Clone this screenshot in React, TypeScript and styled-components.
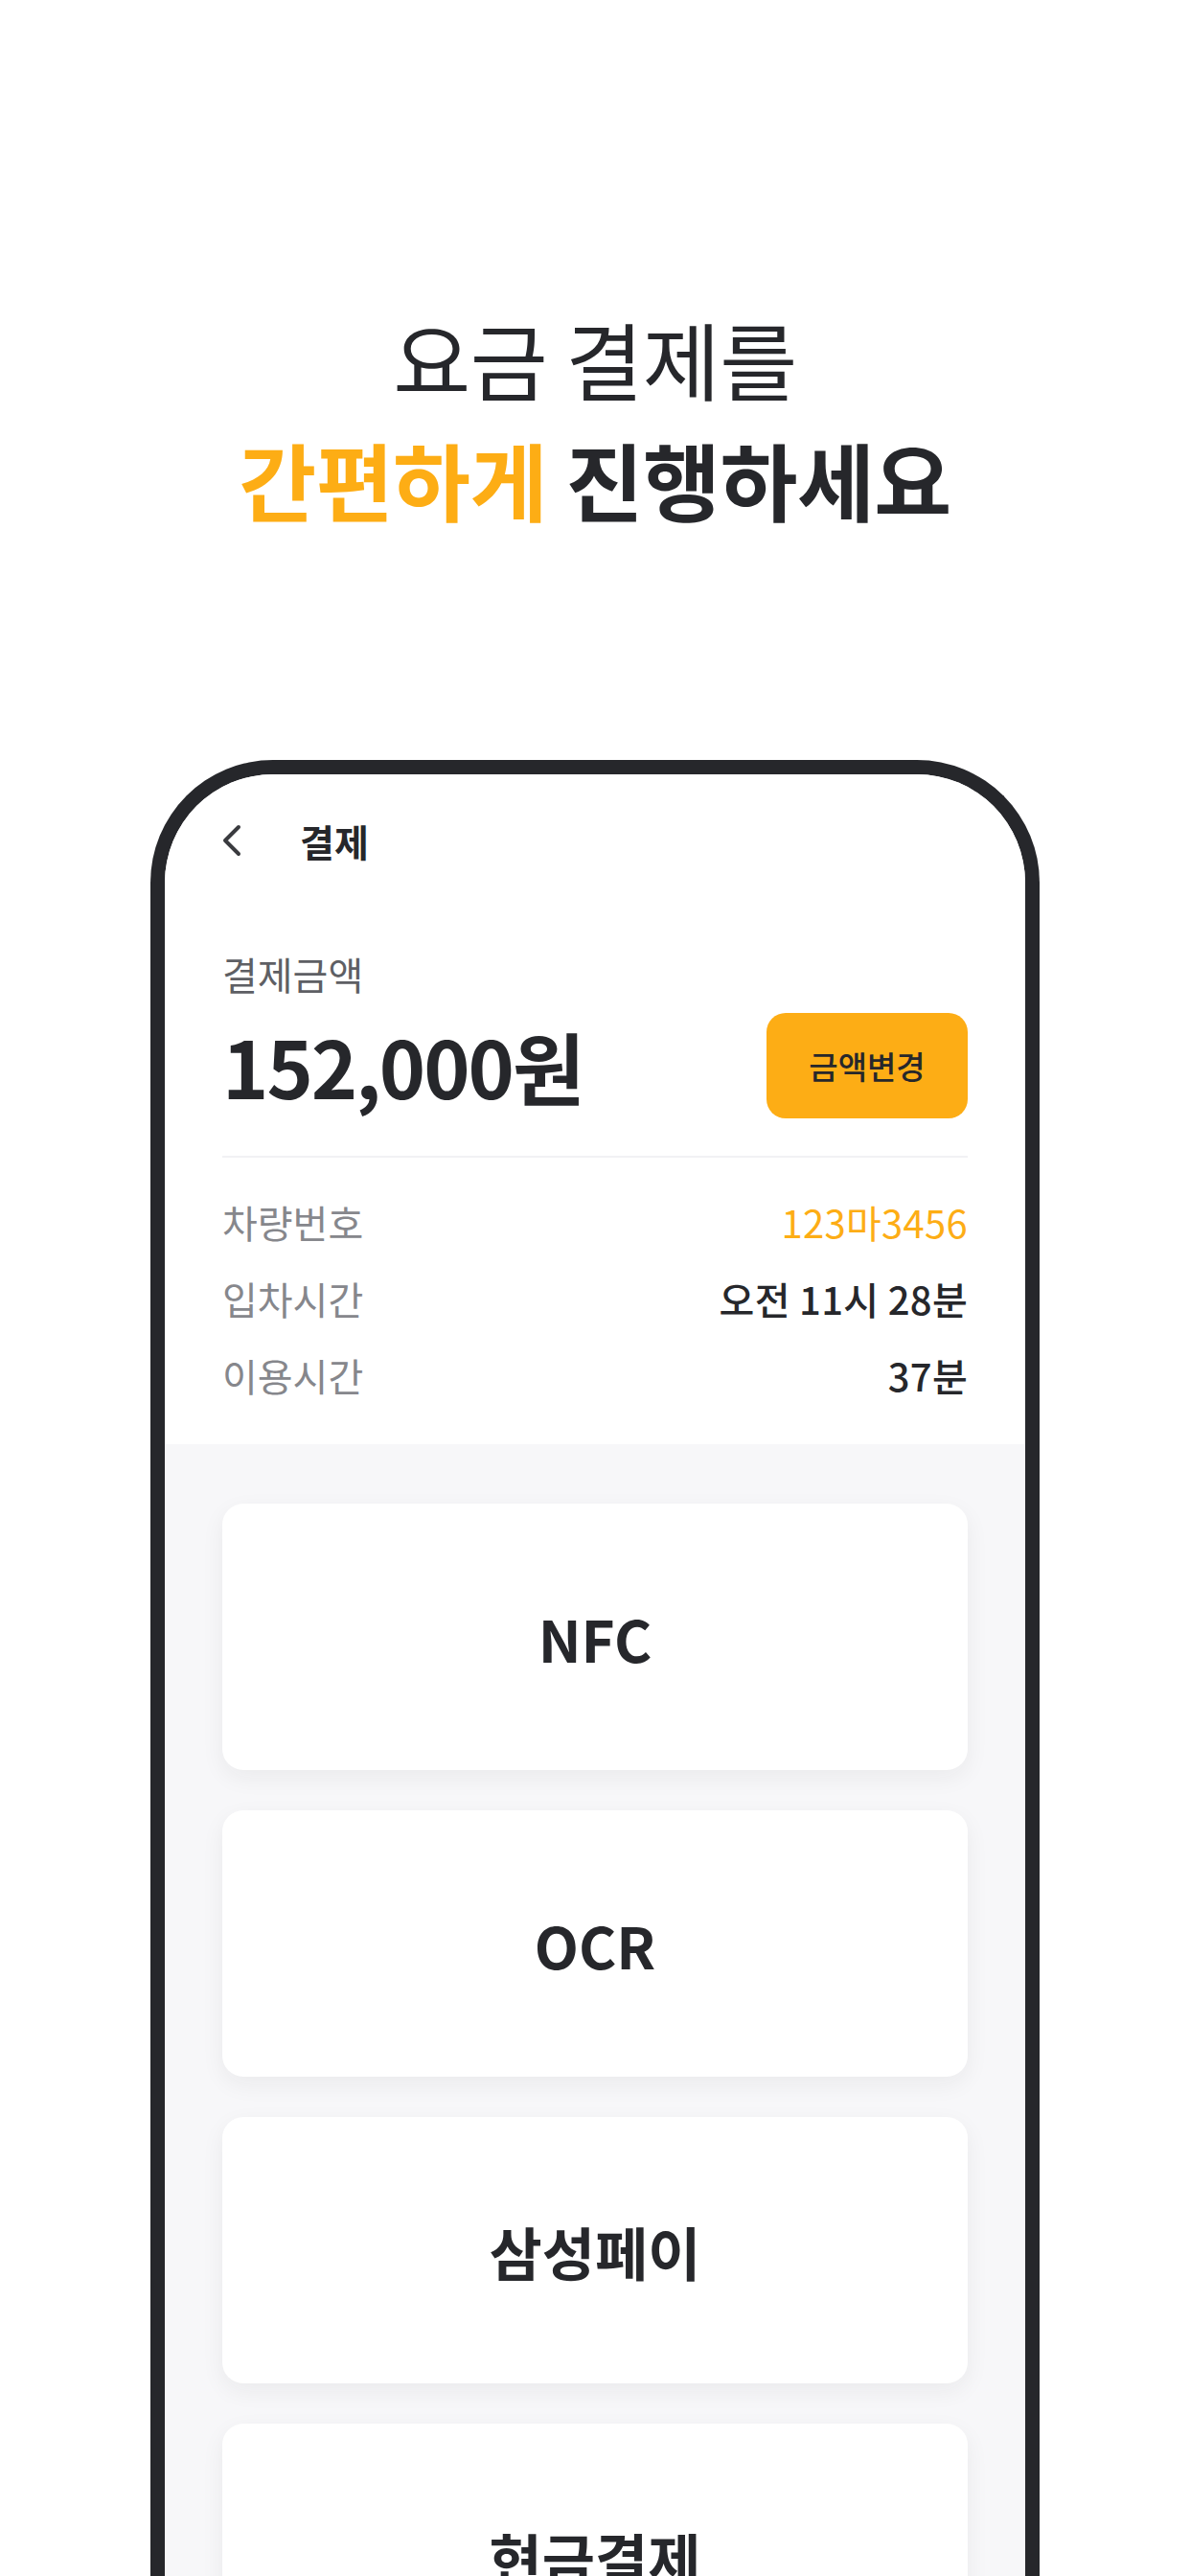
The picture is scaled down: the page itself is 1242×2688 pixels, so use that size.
import React from "react";
import styled, { createGlobalStyle } from "styled-components";

const Global = createGlobalStyle`
  html, body { margin: 0; padding: 0; background: #ffffff; }
  body { font-family: "Noto Sans CJK KR", "Noto Sans", sans-serif; }
  * { box-sizing: border-box; }
`;

const Page = styled.div`
  width: 1242px;
  height: 2688px;
  overflow: hidden;
  display: flex;
  flex-direction: column;
  align-items: center;
  padding-top: 310px;
  background: #ffffff;
`;

const Headline = styled.h1`
  margin: 0;
  font-family: "Noto Sans CJK KR", sans-serif;
  font-size: 88px;
  line-height: 126px;
  text-align: center;
  color: #26272b;
  letter-spacing: -0.5px;
`;

const Line = styled.span<{ $bold?: boolean }>`
  display: block;
  font-weight: ${(p) => (p.$bold ? 700 : 400)};
`;

const Accent = styled.span`
  color: #fdad15;
`;

const Phone = styled.div`
  margin-top: 231px;
  width: 928px;
  flex: 1;
  border: 15px solid #26272b;
  border-bottom: none;
  border-radius: 128px 128px 0 0;
  overflow: hidden;
  display: flex;
  flex-direction: column;
  background: #f7f7f9;
`;

const Header = styled.div`
  flex-shrink: 0;
  height: 138px;
  display: flex;
  align-items: center;
  padding: 0 60px 0 59px;
  gap: 60px;
  background: #ffffff;
`;

const HeaderTitle = styled.div`
  font-size: 39px;
  font-weight: 700;
  color: #26272b;
`;

const Summary = styled.section`
  flex-shrink: 0;
  background: #ffffff;
  padding: 40px 60px 32px;
  display: flex;
  flex-direction: column;
`;

const AmountLabel = styled.div`
  font-size: 40px;
  line-height: 60px;
  color: #5e5f64;
`;

const AmountRow = styled.div`
  margin-top: 11px;
  height: 110px;
  display: flex;
  align-items: center;
  justify-content: space-between;
`;

const Amount = styled.div`
  font-size: 82px;
  font-weight: 700;
  color: #26272b;
  letter-spacing: -2px;
  line-height: 1;
`;

const ChangeButton = styled.button`
  width: 210px;
  height: 110px;
  border: none;
  border-radius: 20px;
  background: #fdad15;
  color: #26272b;
  font-family: "Noto Sans CJK KR", sans-serif;
  font-size: 33px;
  font-weight: 500;
  cursor: pointer;
`;

const Divider = styled.hr`
  margin: 39px 0 27px;
  border: none;
  height: 2px;
  background: #f1f1f4;
`;

const InfoRow = styled.div`
  height: 80px;
  display: flex;
  align-items: center;
  justify-content: space-between;
  font-size: 40px;
`;

const InfoLabel = styled.span`
  color: #86878c;
`;

const InfoValue = styled.span<{ $accent?: boolean }>`
  color: ${(p) => (p.$accent ? "#fdad15" : "#26272b")};
  font-weight: ${(p) => (p.$accent ? 400 : 500)};
  letter-spacing: 0.3px;
`;

const Methods = styled.section`
  flex-shrink: 0;
  padding: 62px 60px 0;
  display: flex;
  flex-direction: column;
  gap: 42px;
`;

const MethodCard = styled.button`
  height: 278px;
  flex-shrink: 0;
  border: none;
  border-radius: 22px;
  background: #ffffff;
  box-shadow: 0 8px 24px rgba(30, 32, 40, 0.06);
  font-family: "Noto Sans CJK KR", sans-serif;
  font-size: 60px;
  font-weight: 700;
  color: #26272b;
  cursor: pointer;
`;

const BackIcon = () => (
  <svg width="22" height="34" viewBox="0 0 22 34" fill="none">
    <path d="M18 3 L4 17 L18 31" stroke="#3a3b3f" strokeWidth="4" strokeLinecap="round" strokeLinejoin="round" />
  </svg>
);

const info = [
  { label: "차량번호", value: "123마3456", accent: true },
  { label: "입차시간", value: "오전 11시 28분" },
  { label: "이용시간", value: "37분" },
];

const methods = ["NFC", "OCR", "삼성페이", "현금결제"];

export default function App() {
  return (
    <>
      <Global />
      <Page>
        <Headline>
          <Line>요금 결제를</Line>
          <Line $bold>
            <Accent>간편하게</Accent> 진행하세요
          </Line>
        </Headline>
        <Phone>
          <Header>
            <BackIcon />
            <HeaderTitle>결제</HeaderTitle>
          </Header>
          <Summary>
            <AmountLabel>결제금액</AmountLabel>
            <AmountRow>
              <Amount>152,000원</Amount>
              <ChangeButton>금액변경</ChangeButton>
            </AmountRow>
            <Divider />
            {info.map((r) => (
              <InfoRow key={r.label}>
                <InfoLabel>{r.label}</InfoLabel>
                <InfoValue $accent={r.accent}>{r.value}</InfoValue>
              </InfoRow>
            ))}
          </Summary>
          <Methods>
            {methods.map((m) => (
              <MethodCard key={m}>{m}</MethodCard>
            ))}
          </Methods>
        </Phone>
      </Page>
    </>
  );
}
